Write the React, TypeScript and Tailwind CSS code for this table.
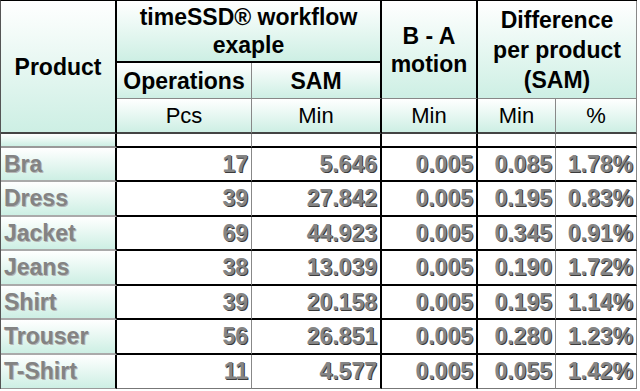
import React from 'react';

const rows = [
  { name: 'Bra', ops: '17', sam: '5.646', ba: '0.005', min: '0.085', pct: '1.78%' },
  { name: 'Dress', ops: '39', sam: '27.842', ba: '0.005', min: '0.195', pct: '0.83%' },
  { name: 'Jacket', ops: '69', sam: '44.923', ba: '0.005', min: '0.345', pct: '0.91%' },
  { name: 'Jeans', ops: '38', sam: '13.039', ba: '0.005', min: '0.190', pct: '1.72%' },
  { name: 'Shirt', ops: '39', sam: '20.158', ba: '0.005', min: '0.195', pct: '1.14%' },
  { name: 'Trouser', ops: '56', sam: '26.851', ba: '0.005', min: '0.280', pct: '1.23%' },
  { name: 'T-Shirt', ops: '11', sam: '4.577', ba: '0.005', min: '0.055', pct: '1.42%' },
];

const mint = 'bg-linear-to-b from-[#ffffff] to-[#cdefe4]';
const head = `${mint} p-0 text-black font-bold text-center align-middle leading-[28px] text-[23px]`;
const unit = `${mint} p-0 text-black font-normal text-center align-middle text-[22px] leading-none`;
const num =
  'bg-white p-0 text-right align-middle pr-[3px] font-bold text-[23px] leading-none text-[#858585] [text-shadow:1px_1px_0_#3c3c3c]';

const App: React.FC = () => {
  return (
    <div className="w-[640px] h-[391px] bg-white font-['Liberation_Sans',Arial,sans-serif]">
      <table className="table-fixed border-separate border-spacing-0 border-l border-t border-l-[#555] border-t-black">
        <colgroup>
          <col className="w-[116px]" />
          <col className="w-[135px]" />
          <col className="w-[130px]" />
          <col className="w-[96px]" />
          <col className="w-[78px]" />
          <col className="w-[81px]" />
        </colgroup>
        <thead>
          <tr className="h-[62px]">
            <th rowSpan={3} className={`${head} border-r-2 border-r-black border-b-2 border-b-[#444]`}>
              Product
            </th>
            <th colSpan={2} className={`${head} border-r-2 border-r-black border-b-2 border-b-black`}>
              timeSSD® workflow
              <br />
              exaple
            </th>
            <th rowSpan={2} className={`${head} border-r-2 border-r-black border-b border-b-[#888]`}>
              B - A
              <br />
              motion
            </th>
            <th
              colSpan={2}
              rowSpan={2}
              className={`${head} leading-[30px] border-r border-r-[#888] border-b border-b-[#888]`}
            >
              Difference
              <br />
              per product
              <br />
              (SAM)
            </th>
          </tr>
          <tr className="h-[36px]">
            <th className={`${head} border-r border-r-[#888] border-b border-b-[#888]`}>Operations</th>
            <th className={`${head} border-r-2 border-r-black border-b border-b-[#888]`}>SAM</th>
          </tr>
          <tr className="h-[35px]">
            <th className={`${unit} border-r border-r-[#888] border-b-2 border-b-[#444]`}>Pcs</th>
            <th className={`${unit} border-r-2 border-r-black border-b-2 border-b-[#444]`}>Min</th>
            <th className={`${unit} border-r-2 border-r-black border-b-2 border-b-[#444]`}>Min</th>
            <th className={`${unit} border-r border-r-[#888] border-b-2 border-b-[#444]`}>Min</th>
            <th className={`${unit} border-r border-r-[#888] border-b-2 border-b-[#444]`}>%</th>
          </tr>
        </thead>
        <tbody>
          <tr className="h-[14px]">
            <td className={`${mint} p-0 border-r-2 border-r-black border-b-2 border-b-[#999]`} />
            <td className="bg-white p-0 border-r border-r-[#888] border-b-2 border-b-black" />
            <td className="bg-white p-0 border-r-2 border-r-black border-b-2 border-b-black" />
            <td className="bg-white p-0 border-r-2 border-r-black border-b-2 border-b-black" />
            <td className="bg-white p-0 border-r border-r-[#888] border-b-2 border-b-black" />
            <td className="bg-white p-0 border-r border-r-[#888] border-b-2 border-b-black" />
          </tr>
          {rows.map((r, i) => {
            const h = i % 2 === 0 ? 'h-[34px]' : 'h-[35px]';
            const last = i === rows.length - 1;
            const bb = last ? 'border-b border-b-[#777]' : 'border-b-2 border-b-black';
            return (
              <tr key={r.name} className={h}>
                <td
                  className={`${mint} ${last ? 'border-b border-b-[#999]' : 'border-b-2 border-b-[#aaa]'} p-0 border-r-2 border-r-black pl-[3px] align-middle leading-none font-bold text-[23px] text-[#838383] [text-shadow:1px_1px_0_#b5b5b5]`}
                >
                  {r.name}
                </td>
                <td className={`${num} ${bb} border-r border-r-[#888]`}>{r.ops}</td>
                <td className={`${num} ${bb} border-r-2 border-r-black`}>{r.sam}</td>
                <td className={`${num} ${bb} border-r-2 border-r-black`}>{r.ba}</td>
                <td className={`${num} ${bb} border-r border-r-[#888]`}>{r.min}</td>
                <td className={`${num} ${bb} border-r border-r-[#888]`}>{r.pct}</td>
              </tr>
            );
          })}
        </tbody>
      </table>
    </div>
  );
};

export default App;
